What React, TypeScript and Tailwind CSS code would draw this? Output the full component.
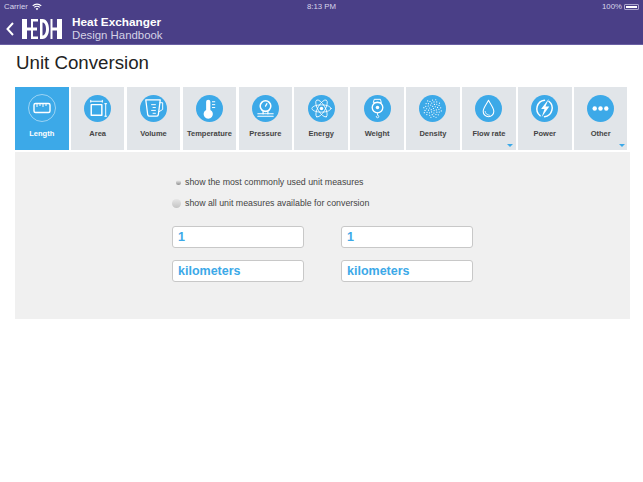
import React from "react";

const blue = "#3ca9e8";

// scattered dots for the density icon
const densityDots = Array.from({ length: 46 }, (_, i) => {
  const r = 1.45 * Math.sqrt(i + 0.5);
  const a = i * 2.39996;
  return { x: 14 + r * Math.cos(a), y: 14 + r * Math.sin(a) };
});

function Disc({ children }: { children: React.ReactNode }) {
  return (
    <svg width="27" height="27" viewBox="0 0 28 28" fill="none" stroke="white" strokeWidth="1" strokeLinecap="round" strokeLinejoin="round">
      <circle cx="14" cy="14" r="14" fill={blue} stroke="none" />
      {children}
    </svg>
  );
}

function Logo() {
  return (
    <svg width="40" height="20" viewBox="0 0 40 20" fill="white">
      <path d="M0 0h5v20H0z" />
      <path d="M5 8.500h4v3H5z" />
      <path d="M9 0h2v20H9z" />
      <path d="M11 0h5v2.500h-5zM11 8.500h4v3h-4zM11 17.500h5V20h-5z" />
      <path d="M18 0h2.500c4 0 6.500 4.500 6.500 10s-2.500 10-6.500 10H18zM20.500 3.500v13c2 0 3.500-2.500 3.500-6.500s-1.500-6.500-3.500-6.500z" fillRule="evenodd" />
      <path d="M28.500 0h2v20h-2zM30.500 8.500H35v3h-4.500zM35 0h5v20h-5z" />
    </svg>
  );
}

const tabs: { label: string; icon: React.ReactNode; more?: boolean }[] = [
  {
    label: "Area",
    icon: (
      <Disc>
        <rect x="7.500" y="10" width="11" height="11" strokeWidth="1.500" />
        <path d="M7 6.500h12M7 5.500v2M19 5.500v2M22.500 9v13M21.500 9h2M21.500 22h2" />
      </Disc>
    ),
  },
  {
    label: "Volume",
    icon: (
      <Disc>
        <path d="M6 5h15l-2 15.500a2 2 0 0 1-2 1.500h-7a2 2 0 0 1-2-1.500z" strokeWidth="1.300" />
        <path d="M20.500 8h3v7l-4 2.500M12 10h4M13.500 13h2.500M12 16h4M13.500 19h2.500" />
      </Disc>
    ),
  },
  {
    label: "Temperature",
    icon: (
      <Disc>
        <path d="M10.500 7a2.200 2.200 0 0 1 4.400 0v8.500a4.800 4.800 0 1 1-4.400 0z" fill="white" stroke="none" />
        <path d="M17 7h2.500M17 10h2.500M17 13h2.500" />
      </Disc>
    ),
  },
  {
    label: "Pressure",
    icon: (
      <Disc>
        <circle cx="14" cy="11.500" r="5.500" strokeWidth="1.600" />
        <path d="M14 11.500l1.500-2.500M11.500 17v2.500M16.500 17v2.500" strokeWidth="1.300" />
        <path d="M6 19.500h16M6 22h16" strokeWidth="1.100" />
      </Disc>
    ),
  },
  {
    label: "Energy",
    icon: (
      <Disc>
        <ellipse cx="14" cy="14" rx="10" ry="3.800" strokeWidth="0.800" />
        <ellipse cx="14" cy="14" rx="10" ry="3.800" strokeWidth="0.800" transform="rotate(60 14 14)" />
        <ellipse cx="14" cy="14" rx="10" ry="3.800" strokeWidth="0.800" transform="rotate(120 14 14)" />
        <circle cx="14" cy="14" r="1.800" fill="white" stroke="none" />
      </Disc>
    ),
  },
  {
    label: "Weight",
    icon: (
      <Disc>
        <path d="M11 4.500h6l1 3.500h-8z" strokeWidth="1" />
        <circle cx="14" cy="13" r="5.500" strokeWidth="1.400" />
        <circle cx="14" cy="13" r="1.800" fill="white" stroke="none" />
        <path d="M14 18.500v2.500a1.300 1.300 0 1 1-1.300 1.300" strokeWidth="0.900" />
      </Disc>
    ),
  },
  {
    label: "Density",
    icon: (
      <Disc>
        {densityDots.map((d, i) => (
          <circle key={i} cx={d.x} cy={d.y} r={0.62} fill="white" stroke="none" />
        ))}
      </Disc>
    ),
  },
  {
    label: "Flow rate",
    more: true,
    icon: (
      <Disc>
        <path d="M14 5.500c1.800 3.800 5.500 7.500 5.500 11.500a5.500 5.500 0 0 1-11 0c0-4 3.700-7.700 5.500-11.500z" strokeWidth="1.100" />
        <path d="M10.500 17c.3 2.300 2 3.800 4.500 4" strokeWidth="0.800" />
      </Disc>
    ),
  },
  {
    label: "Power",
    icon: (
      <Disc>
        <path d="M9.500 21.500A9 9 0 0 1 14 5.500M18.500 6.500A9 9 0 0 1 14 22.500" strokeWidth="1.500" />
        <path d="M18.500 4l-8 10.500h3.500L11 23l8-11h-4z" fill="white" stroke="none" />
      </Disc>
    ),
  },
  {
    label: "Other",
    more: true,
    icon: (
      <Disc>
        <circle cx="8" cy="14" r="2.300" fill="white" stroke="none" />
        <circle cx="14" cy="14" r="2.300" fill="white" stroke="none" />
        <circle cx="20" cy="14" r="2.300" fill="white" stroke="none" />
      </Disc>
    ),
  },
];

function Tab({ label, icon, more }: { label: string; icon: React.ReactNode; more?: boolean }) {
  return (
    <div className="relative flex h-[62.5px] w-[53.5px] shrink-0 flex-col items-center bg-[#e1e5e9] pt-[7.5px]">
      {icon}
      <span className="mt-[6px] text-[7.5px] leading-[12px] font-bold whitespace-nowrap text-[#444]">{label}</span>
      {more && (
        <span className="absolute right-[2.5px] bottom-[2.5px] h-0 w-0 border-x-[3.5px] border-t-[3.5px] border-x-transparent border-t-[#3ca9e8]" />
      )}
    </div>
  );
}

function Field({ value }: { value: string }) {
  return (
    <div className="flex h-[22px] w-[132px] items-center rounded-[3px] border border-[#c8c8c8] bg-white pl-[5px] text-[12.5px] font-bold text-[#3ca9e8]">
      {value}
    </div>
  );
}

export default function App() {
  return (
    <div className="h-[482px] w-[643px] overflow-hidden bg-white font-['Liberation_Sans',Arial,sans-serif]">
      <header className="h-[45px] border-b border-[#6a60a3] bg-[#4a3f87] text-white">
        <div className="flex h-[13px] items-center justify-between pr-[4px] pl-[4px] text-[7.8px] text-[#d9d6ea]">
          <div className="flex w-[60px] items-center gap-[4px]">
            <span>Carrier</span>
            <svg width="10" height="8" viewBox="0 0 11 8" fill="none" stroke="white" strokeWidth="1.200">
              <path d="M.8 2.800a6.500 6.500 0 0 1 9.400 0M2.500 4.500a4 4 0 0 1 6 0" />
              <path d="M4 6a2 2 0 0 1 3 0l-1.500 1.600z" fill="white" stroke="none" />
            </svg>
          </div>
          <span>8:13 PM</span>
          <div className="flex w-[60px] items-center justify-end gap-[2px]">
            <span>100%</span>
            <span className="flex h-[6px] w-[15px] items-center rounded-[1px] border border-[#a9a3cc] p-px">
              <span className="h-full w-full bg-white" />
            </span>
          </div>
        </div>
        <div className="flex h-[31px] items-center pl-[6px]">
          <svg width="8" height="14" viewBox="0 0 8 14" fill="none" stroke="white" strokeWidth="2">
            <path d="M7 1L1.500 7 7 13" />
          </svg>
          <div className="ml-[8px]">
            <Logo />
          </div>
          <div className="ml-[10px] leading-[12.5px]">
            <div className="text-[11.8px] font-bold">Heat Exchanger</div>
            <div className="text-[11.4px] text-[#d5d2e6]">Design Handbook</div>
          </div>
        </div>
      </header>

      <main className="px-[15px]">
        <h1 className="mt-[6px] pl-px text-[18.7px] leading-[24px] text-[#222]">Unit Conversion</h1>
        <div className="mt-[12px] flex gap-[2.4px]">
          <div className="flex h-[62.5px] w-[53.5px] shrink-0 flex-col items-center bg-[#3ca9e8] pt-[7px]">
            <svg width="28" height="28" viewBox="0 0 28 28" fill="none" stroke="white" strokeWidth="1">
              <circle cx="14" cy="14" r="13.500" strokeOpacity="0.7" strokeWidth="0.700" />
              <rect x="6" y="9.500" width="16" height="9" rx="1.500" strokeWidth="1.400" />
              <path d="M9 10v3M12 10v2M15 10v3M18 10v2" />
            </svg>
            <span className="mt-[6px] text-[7.5px] leading-[12px] font-bold text-white">Length</span>
          </div>
          {tabs.map((t) => (
            <Tab key={t.label} {...t} />
          ))}
        </div>

        <section className="mt-[2.500px] h-[167px] w-[615px] bg-[#f0f0f0] pt-[20px] pl-[157px]">
          <div className="flex h-[21px] items-center text-[8.8px] text-[#444]">
            <span className="flex w-[13px] justify-center">
              <span className="h-[5px] w-[5px] rounded-full bg-gradient-to-b from-[#f4f4f4] to-[#8f8f8f]" />
            </span>
            <span>show the most commonly used unit measures</span>
          </div>
          <div className="flex h-[21px] items-center text-[8.8px] text-[#444]">
            <span className="flex w-[13px] justify-start">
              <span className="h-[9px] w-[9px] rounded-full bg-gradient-to-b from-[#e6e6e6] to-[#c4c4c4]" />
            </span>
            <span>show all unit measures available for conversion</span>
          </div>
          <div className="mt-[12px] grid w-[301px] grid-cols-[132px_132px] justify-between gap-y-[12px]">
            <Field value="1" />
            <Field value="1" />
            <Field value="kilometers" />
            <Field value="kilometers" />
          </div>
        </section>
      </main>
    </div>
  );
}
